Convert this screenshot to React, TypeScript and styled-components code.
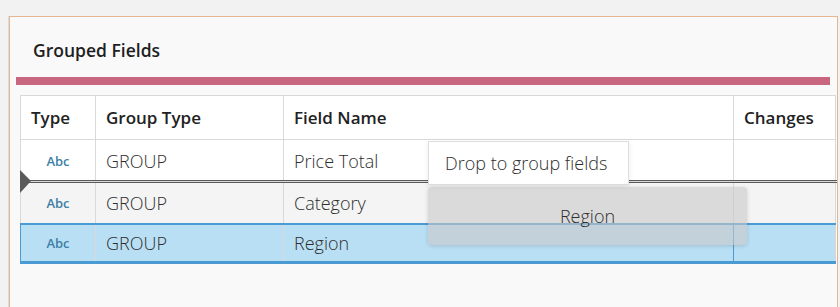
import {createGlobalStyle, styled} from "styled-components";

interface FieldRow {
  groupType: string;
  fieldName: string;
  selected?: boolean;
}

const rows: FieldRow[] = [
  {groupType: "GROUP", fieldName: "Price Total"},
  {groupType: "GROUP", fieldName: "Category"},
  {groupType: "GROUP", fieldName: "Region", selected: true},
];

const columns = [75, 188, 450, 102];

const GlobalStyle = createGlobalStyle`
  html, body {
    margin: 0;
    background: #f2f2f2;
    font-family: "Open Sans", "Noto Sans", "Liberation Sans", sans-serif;
    color: #333;
  }
`;

const Page = styled.div`
  display: flex;
  height: 307px;
  padding-top: 16px;
  box-sizing: border-box;
  overflow: hidden;
`;

const Gutter = styled.div`
  width: 8px;
  border-right: 1px solid #dcdcdc;
`;

const Panel = styled.section`
  width: 829px;
  box-sizing: border-box;
  border: 1px solid #e6b592;
  border-bottom: none;
  background: #f9f9f9;
  overflow: hidden;
`;

const Title = styled.h2`
  margin: 0;
  height: 60px;
  box-sizing: border-box;
  padding: 6px 0 0 23px;
  display: flex;
  align-items: center;
  font-size: 17.5px;
  font-weight: 600;
  color: #1f1f1f;
`;

const Bar = styled.div`
  height: 8px;
  margin: 0 7px 0 6px;
  background: #c9667f;
`;

const TableWrap = styled.div`
  position: relative;
  margin: 10px 0 0 10px;
  width: 815px;
`;

const Table = styled.table`
  width: 815px;
  border-collapse: collapse;
  table-layout: fixed;
  font-size: 18px;
`;

const Head = styled.th`
  height: 43px;
  padding: 0 0 0 10px;
  text-align: left;
  font-size: 17px;
  font-weight: 600;
  color: #222;
  background: #fff;
  border: 1px solid #d9d9d9;
`;

const Row = styled.tr<{selected?: boolean; striped?: boolean}>`
  background: ${(p) =>
    p.selected ? "#b9dff4" : p.striped ? "#f4f4f4" : "#ffffff"};
  ${(p) =>
    p.selected &&
    `
    & > td {
      height: 36px;
      border-top: 2px solid #4a9ad4;
      border-bottom: 3px solid #4a9ad4;
    }
    & > td:first-child { border-left: 1px solid #4a9ad4; }
    & > td:nth-child(3) { border-right: 1px solid #4a9ad4; }
  `}
`;

const Cell = styled.td`
  height: 41px;
  padding: 0 0 0 10px;
  font-weight: 300;
  color: #2e2e2e;
  border: 1px solid #d9d9d9;
  white-space: nowrap;
`;

const TypeCell = styled(Cell)`
  padding: 0;
  text-align: center;
  font-size: 13px;
  font-weight: 600;
  color: #3d7fa6;
`;

const DropLine = styled.div`
  position: absolute;
  left: 0;
  right: -10px;
  top: 85px;
  border-top: 3px double #5a5a5a;
`;

const DropMarker = styled.div`
  position: absolute;
  left: 0;
  top: 75px;
  width: 0;
  height: 0;
  border-top: 11px solid transparent;
  border-bottom: 12px solid transparent;
  border-left: 11px solid #5a5a5a;
`;

const DropHint = styled.div`
  position: absolute;
  left: 408px;
  top: 46px;
  width: 201px;
  height: 44px;
  box-sizing: border-box;
  padding-left: 16px;
  display: flex;
  align-items: center;
  background: #fff;
  border: 1px solid #dedede;
  box-shadow: 0 2px 6px rgba(0, 0, 0, 0.08);
  font-size: 18px;
  font-weight: 300;
  color: #2e2e2e;
  white-space: nowrap;
`;

const Ghost = styled.div`
  position: absolute;
  left: 408px;
  top: 92px;
  width: 319px;
  height: 58px;
  border-radius: 4px;
  display: flex;
  align-items: center;
  justify-content: center;
  background: rgba(200, 200, 200, 0.6);
  box-shadow: 0 1px 4px rgba(0, 0, 0, 0.15);
  font-size: 18px;
  font-weight: 300;
  color: #2e2e2e;
`;

export default function App() {
  return (
    <>
      <GlobalStyle />
      <Page>
        <Gutter />
        <Panel>
          <Title>Grouped Fields</Title>
          <Bar />
          <TableWrap>
            <Table>
              <colgroup>
                {columns.map((w, i) => (
                  <col key={i} style={{width: w}} />
                ))}
              </colgroup>
              <thead>
                <tr>
                  <Head>Type</Head>
                  <Head>Group Type</Head>
                  <Head>Field Name</Head>
                  <Head>Changes</Head>
                </tr>
              </thead>
              <tbody>
                {rows.map((row, i) => (
                  <Row key={row.fieldName} selected={row.selected} striped={i % 2 === 1}>
                    <TypeCell>Abc</TypeCell>
                    <Cell>{row.groupType}</Cell>
                    <Cell>{row.fieldName}</Cell>
                    <Cell />
                  </Row>
                ))}
              </tbody>
            </Table>
            <DropLine />
            <DropMarker />
            <DropHint>Drop to group fields</DropHint>
            <Ghost>Region</Ghost>
          </TableWrap>
        </Panel>
      </Page>
    </>
  );
}
